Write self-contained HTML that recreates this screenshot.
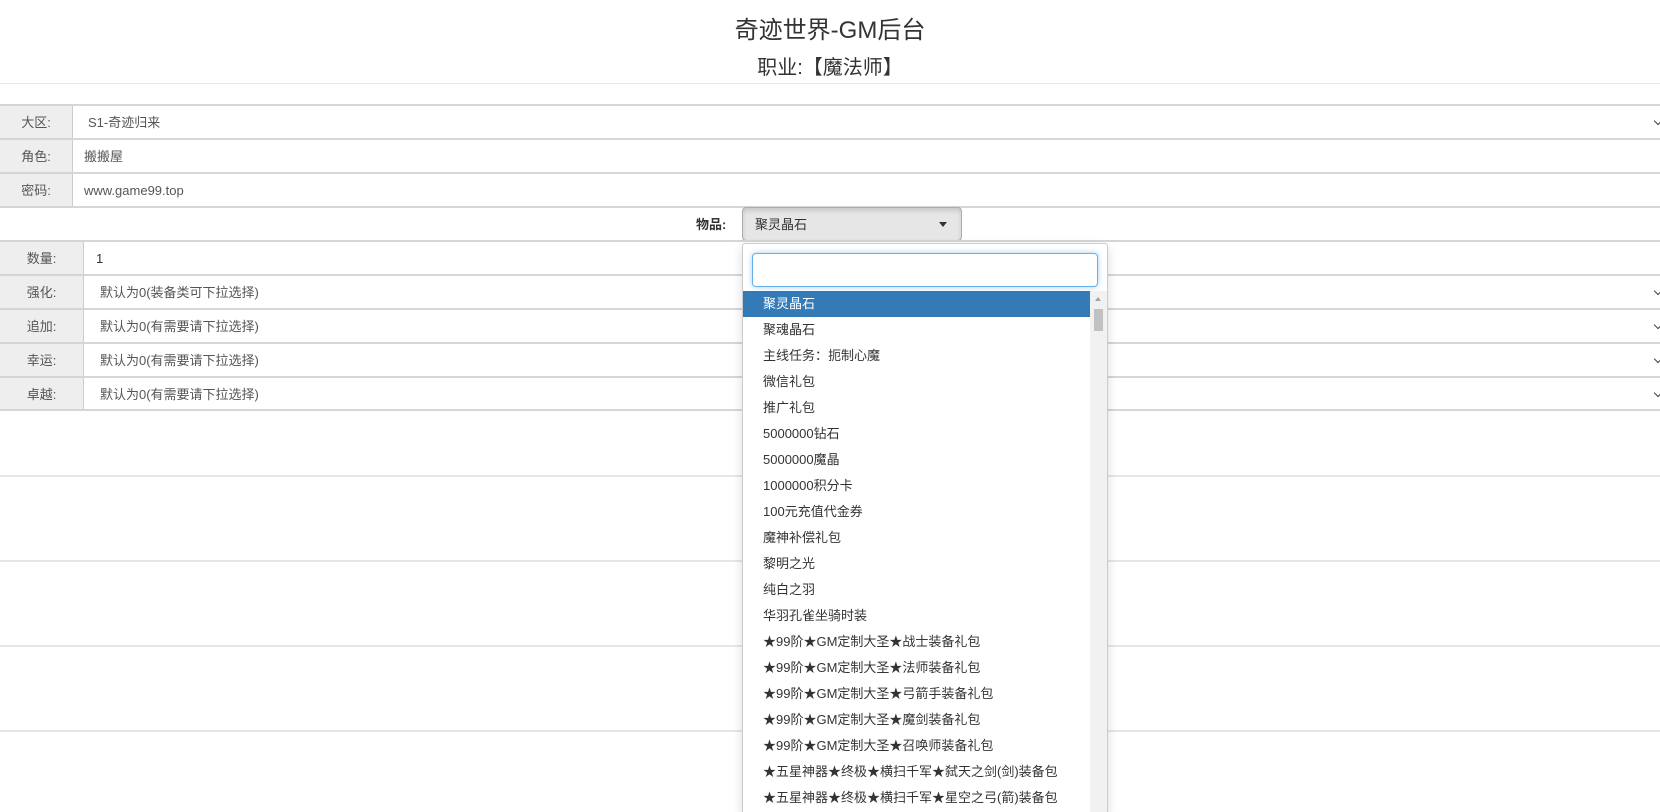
<!DOCTYPE html>
<html><head><meta charset="utf-8"><style>
html{height:812px;overflow:hidden}
body{margin:0;width:1660px;height:812px;overflow:hidden;background:#fff;font-family:"Liberation Sans","Noto Sans CJK SC",sans-serif;color:#333;position:relative}
.abs{position:absolute}
.t1{top:14px;left:0;width:1660px;text-align:center;font-size:24px;line-height:34px}
.t2{top:53px;left:0;width:1660px;text-align:center;font-size:20px;line-height:30px}
.row{position:absolute;left:0;width:1660px;height:32px;border-top:2px solid #d6d6d6;font-size:13px;color:#555}
.row .lb{position:absolute;left:0;top:0;height:32px;background:#eee;border-right:1px solid #ccc;text-align:center;line-height:33px}
.row .v{position:absolute;top:0;line-height:33px}
.chev{position:absolute;right:-1px;top:12px;width:5px;height:5px;border-right:1.5px solid #444;border-bottom:1.5px solid #444;transform:rotate(45deg)}
.line{position:absolute;left:0;width:1660px;height:2px;background:#e6e6e6}
.panel{left:742px;top:243px;width:364px;height:569px;border:1px solid #ccc;border-bottom:none;background:#fff;box-shadow:0 4px 10px rgba(0,0,0,.15);border-radius:3px 3px 0 0;overflow:hidden;box-sizing:content-box}
.it{position:absolute;left:0;width:347px;height:26px;line-height:26px;font-size:13px;color:#333;padding-left:20px;box-sizing:border-box}
</style></head><body>
<div class="abs t1">奇迹世界-GM后台</div>
<div class="abs t2">职业:【魔法师】</div>
<div class="line" style="top:83px;height:1px"></div>
<div class="row" style="top:104px"><div class="lb" style="width:72px">大区:</div><div class="v" style="left:88px">S1-奇迹归来</div><div class="chev"></div></div>
<div class="row" style="top:138px"><div class="lb" style="width:72px">角色:</div><div class="v" style="left:84px">搬搬屋</div></div>
<div class="row" style="top:172px"><div class="lb" style="width:72px">密码:</div><div class="v" style="left:84px">www.game99.top</div></div>
<div class="row" style="top:206px;background:#fff"><div class="v" style="left:696px;font-weight:bold;color:#333">物品:</div></div>
<div class="abs" style="left:742px;top:207px;width:218px;height:32px;background:#e6e6e6;border:1px solid #adadad;border-radius:4px;box-shadow:inset 0 3px 5px rgba(0,0,0,.125);font-size:13px;line-height:33px;color:#333"><span style="margin-left:12px">聚灵晶石</span><span style="position:absolute;right:14px;top:14px;border-left:4px solid transparent;border-right:4px solid transparent;border-top:5px solid #333"></span></div>
<div class="row" style="top:240px"><div class="lb" style="width:83px">数量:</div><div class="v" style="left:96px;color:#333">1</div></div>
<div class="row" style="top:274px"><div class="lb" style="width:83px">强化:</div><div class="v" style="left:100px">默认为0(装备类可下拉选择)</div><div class="chev"></div></div>
<div class="row" style="top:308px"><div class="lb" style="width:83px">追加:</div><div class="v" style="left:100px">默认为0(有需要请下拉选择)</div><div class="chev"></div></div>
<div class="row" style="top:342px"><div class="lb" style="width:83px">幸运:</div><div class="v" style="left:100px">默认为0(有需要请下拉选择)</div><div class="chev"></div></div>
<div class="row" style="top:376px"><div class="lb" style="width:83px">卓越:</div><div class="v" style="left:100px">默认为0(有需要请下拉选择)</div><div class="chev"></div></div>
<div class="line" style="top:409px;background:#d6d6d6"></div>
<div class="line" style="top:475px"></div>
<div class="line" style="top:560px"></div>
<div class="line" style="top:645px"></div>
<div class="line" style="top:730px"></div>
<div class="abs panel">
<div class="abs" style="left:9px;top:9px;width:346px;height:34px;box-sizing:border-box;border:1px solid #66afe9;border-radius:4px;box-shadow:0 0 6px rgba(102,175,233,.6)"></div>
<div class="abs" style="left:347px;top:47px;width:17px;height:522px;background:#f1f1f1"><div style="position:absolute;left:5px;top:6px;border-left:3px solid transparent;border-right:3px solid transparent;border-bottom:4px solid #a3a3a3"></div><div style="position:absolute;left:4px;top:18px;width:9px;height:22px;background:#c1c1c1"></div></div>
<div class="it" style="top:47px;background:#337ab7;color:#fff">聚灵晶石</div>
<div class="it" style="top:73px">聚魂晶石</div>
<div class="it" style="top:99px">主线任务：扼制心魔</div>
<div class="it" style="top:125px">微信礼包</div>
<div class="it" style="top:151px">推广礼包</div>
<div class="it" style="top:177px">5000000钻石</div>
<div class="it" style="top:203px">5000000魔晶</div>
<div class="it" style="top:229px">1000000积分卡</div>
<div class="it" style="top:255px">100元充值代金券</div>
<div class="it" style="top:281px">魔神补偿礼包</div>
<div class="it" style="top:307px">黎明之光</div>
<div class="it" style="top:333px">纯白之羽</div>
<div class="it" style="top:359px">华羽孔雀坐骑时装</div>
<div class="it" style="top:385px">★99阶★GM定制大圣★战士装备礼包</div>
<div class="it" style="top:411px">★99阶★GM定制大圣★法师装备礼包</div>
<div class="it" style="top:437px">★99阶★GM定制大圣★弓箭手装备礼包</div>
<div class="it" style="top:463px">★99阶★GM定制大圣★魔剑装备礼包</div>
<div class="it" style="top:489px">★99阶★GM定制大圣★召唤师装备礼包</div>
<div class="it" style="top:515px">★五星神器★终极★横扫千军★弑天之剑(剑)装备包</div>
<div class="it" style="top:541px;height:28px">★五星神器★终极★横扫千军★星空之弓(箭)装备包</div>
</div>
</body></html>
